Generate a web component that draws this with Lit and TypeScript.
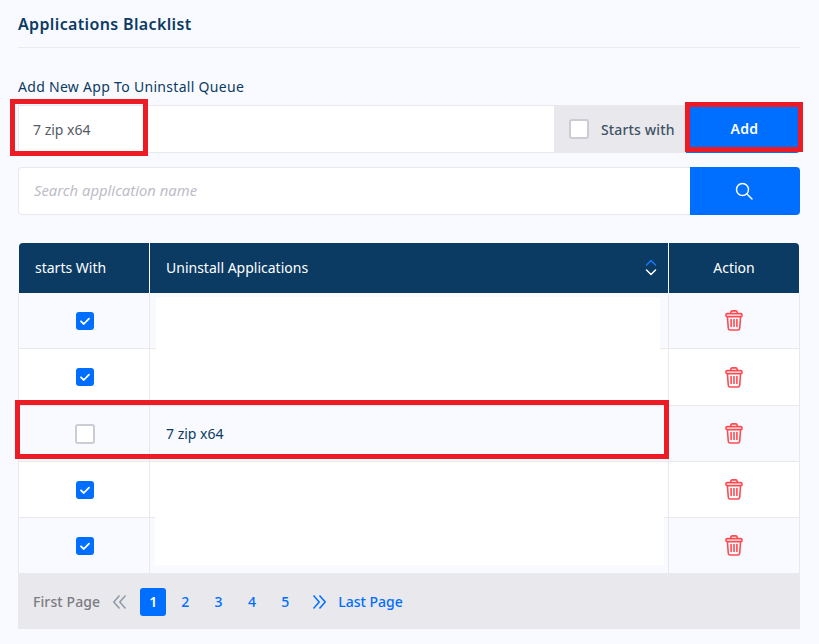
import { LitElement, html, css, svg } from "lit";
import { customElement } from "lit/decorators.js";

const trash = html`<svg class="trash" width="18" height="21" viewBox="0 0 18 21" fill="none" stroke="#ff4a50" stroke-width="1.6" stroke-linejoin="round" stroke-linecap="round">
  <path d="M5.8 3.4V2.4C5.8 1.4 6.4 .9 7.3 .9h3.400c.9 0 1.500.5 1.500 1.500v1"/>
  <rect x=".9" y="3.6" width="16.2" height="3" rx="1.4"/>
  <path d="M2.4 6.8l.9 11.400c.1 1 .8 1.800 1.900 1.800h7.600c1.100 0 1.800-.8 1.900-1.800l.9-11.400"/>
  <path d="M6.100 9.500v7M9 9.500v7M11.900 9.500v7"/>
</svg>`;

const check = svg`<path d="M5 9.3l2.800 2.700L13 6.600" fill="none" stroke="#fff" stroke-width="1.8" stroke-linecap="round" stroke-linejoin="round"/>`;

@customElement("app-root")
export class AppRoot extends LitElement {
  static styles = css`
    :host {
      display: block;
      position: relative;
      width: 819px;
      height: 644px;
      overflow: hidden;
      background: #f9faff;
      font-family: "Noto Sans", sans-serif;
      color: #0b3b63;
      font-size: 14px;
    }
    * { box-sizing: border-box; }
    .page { padding: 0 19px 0 18px; display: flex; flex-direction: column; }
    .title {
      height: 48px;
      line-height: 48px;
      font-size: 16px;
      font-weight: 600;
      letter-spacing: 0.36px;
      border-bottom: 1px solid #e9eaf0;
      color: #0b3b63;
    }
    .label { margin-top: 29px; height: 28px; line-height: 20px; font-size: 14px; font-weight: 400; letter-spacing: 0.3px; color: #0b3b63; }
    .add-row { display: flex; height: 48px; }
    .add-input {
      flex: 1;
      background: #fff;
      border: 1px solid #e9e8ec;
      border-right: 0;
      padding-left: 14px;
      display: flex;
      align-items: center;
      color: #555a66;
      font-size: 14px;
    }
    .addon {
      width: 132px;
      background: #e9e8ec;
      display: flex;
      align-items: center;
      gap: 12px;
      padding-left: 15px;
      color: #3f5266;
      font-weight: 500;
      letter-spacing: 0.15px;
    }
    .box { width: 20px; height: 20px; background: #fff; border: 2px solid #ccccd4; border-radius: 3px; flex: none; }
    .add-btn {
      width: 114px;
      background: #006eff;
      color: #fff;
      font-weight: 600;
      letter-spacing: 0.3px;
      border-radius: 0 4px 4px 0;
      display: flex;
      align-items: center;
      justify-content: center;
      padding: 0 0 2px 3px;
    }
    .search-row { display: flex; height: 48px; margin-top: 14px; }
    .search-input {
      flex: 1;
      background: #fff;
      border: 1px solid #e9e8ec;
      border-right: 0;
      border-radius: 4px 0 0 4px;
      padding: 0 0 2px 15px;
      display: flex;
      align-items: center;
      font-style: italic;
      color: #bdbdc6;
      font-size: 14.8px;
    }
    .search-btn {
      width: 110px;
      background: #006eff;
      border-radius: 0 4px 4px 0;
      display: flex;
      align-items: center;
      justify-content: center;
      padding-right: 2px;
    }
    .table { margin-top: 28px; display: flex; flex-direction: column; }
    .row { display: grid; grid-template-columns: 132px 519px 131px; }
    .head {
      height: 50px;
      margin: 0 1px;
      grid-template-columns: 131px 519px 130px;
      background: #0b3b63;
      color: #fff;
      border-radius: 4px 4px 0 0;
    }
    .head > div { display: flex; align-items: center; padding-bottom: 2px; }
    .head > div + div { border-left: 1px solid #fff; }
    .head .c1 { padding-left: 16px; }
    .head .c2 { margin-left: -1px; padding: 0 12px 2px 16px; justify-content: space-between; }
    .head .c3 { margin-left: -1px; justify-content: center; }
    .body-row { height: 56px; background: #fff; }
    .body-row:nth-child(even) { background: #f9faff; }
    .body-row:nth-child(3) { height: 57px; }
    .body-row:nth-child(6) { height: 55px; }
    .body-row > div {
      display: flex;
      align-items: center;
      border-right: 1px solid #e9e8ec;
      border-bottom: 1px solid #e9e8ec;
    }
    .body-row:nth-child(6) > div { border-bottom: 0; }
    .cell-c { justify-content: center; }
    .first { border-left: 1px solid #e9e8ec; padding-left: 2px; }
    .cell-t { padding-left: 16px; color: #0b3b63; }
    .tick { display: block; }
    .pager {
      height: 56px;
      background: #e9e8ec;
      display: flex;
      align-items: center;
      padding: 1px 0 0 15px;
      color: #006eff;
    }
    .muted { color: #7c7c82; font-weight: 500; letter-spacing: 0.1px; }
    .p { width: 26px; height: 28px; display: flex; align-items: center; justify-content: center; font-weight: 500; margin-right: 7.4px; }
    .p.on { background: #006eff; color: #fff; border-radius: 3px; font-weight: 600; margin-right: 6px; }
    .prev { margin: 0 14px 0 13px; display: block; }
    .next { margin: 0 12px 0 7.5px; display: block; }
    .last { font-weight: 500; }
    .mask { position: absolute; background: #fff; }
    .mask.a { left: 156px; top: 297px; width: 504px; height: 53px; }
    .mask.b { left: 155px; top: 517px; width: 509px; height: 48px; }
    .mark { position: absolute; border: 5px solid #ed1c24; }
    .mark.i { left: 10px; top: 99px; width: 138px; height: 57px; }
    .mark.b { left: 685px; top: 102px; width: 118px; height: 50px; }
    .mark.r { left: 15px; top: 400px; width: 654px; height: 59px; }
  `;

  private row(on: boolean, text = "") {
    return html`<div class="row body-row">
      <div class="first cell-c">
        ${on
          ? html`<svg class="tick" width="18" height="18" viewBox="0 0 18 18"><rect width="18" height="18" rx="3" fill="#006eff"/>${check}</svg>`
          : html`<span class="box"></span>`}
      </div>
      <div class="cell-t">${text}</div>
      <div class="cell-c">${trash}</div>
    </div>`;
  }

  render() {
    return html`
      <div class="page">
        <div class="title">Applications Blacklist</div>
        <div class="label">Add New App To Uninstall Queue</div>
        <div class="add-row">
          <div class="add-input">7 zip x64</div>
          <div class="addon"><span class="box"></span><span>Starts with</span></div>
          <div class="add-btn">Add</div>
        </div>
        <div class="search-row">
          <div class="search-input">Search application name</div>
          <div class="search-btn">
            <svg width="18" height="18" viewBox="0 0 18 18" fill="none" stroke="#fff" stroke-width="1.5" stroke-linecap="round">
              <circle cx="7.5" cy="7.5" r="6"/><path d="M12 12l5 5"/>
            </svg>
          </div>
        </div>
        <div class="table">
          <div class="row head">
            <div class="c1">starts With</div>
            <div class="c2">
              <span>Uninstall Applications</span>
              <svg width="12" height="17" viewBox="0 0 12 17" fill="none" stroke-width="1.5" stroke-linecap="round" stroke-linejoin="round">
                <path d="M1.5 6L6 1.5 10.5 6" stroke="#1677ff"/>
                <path d="M1.5 11L6 15.5 10.500 11" stroke="#fff"/>
              </svg>
            </div>
            <div class="c3">Action</div>
          </div>
          ${this.row(true)}
          ${this.row(true)}
          ${this.row(false, "7 zip x64")}
          ${this.row(true)}
          ${this.row(true)}
          <div class="pager">
            <span class="muted">First Page</span>
            <svg class="prev" width="13" height="14" viewBox="0 0 13 14" fill="none" stroke="#8f99a8" stroke-width="1.5">
              <path d="M6.5 .5L.8 7l5.700 6.500M12.500 .5L6.800 7l5.700 6.500"/>
            </svg>
            <span class="p on">1</span>
            <span class="p">2</span>
            <span class="p">3</span>
            <span class="p">4</span>
            <span class="p">5</span>
            <svg class="next" width="13" height="14" viewBox="0 0 13 14" fill="none" stroke="#006eff" stroke-width="1.5">
              <path d="M.5 .5L6.200 7 .5 13.500M6.500 .5L12.200 7 6.500 13.500"/>
            </svg>
            <span class="last">Last Page</span>
          </div>
        </div>
      </div>
      <div class="mask a"></div>
      <div class="mask b"></div>
      <div class="mark i"></div>
      <div class="mark b"></div>
      <div class="mark r"></div>
    `;
  }
}
